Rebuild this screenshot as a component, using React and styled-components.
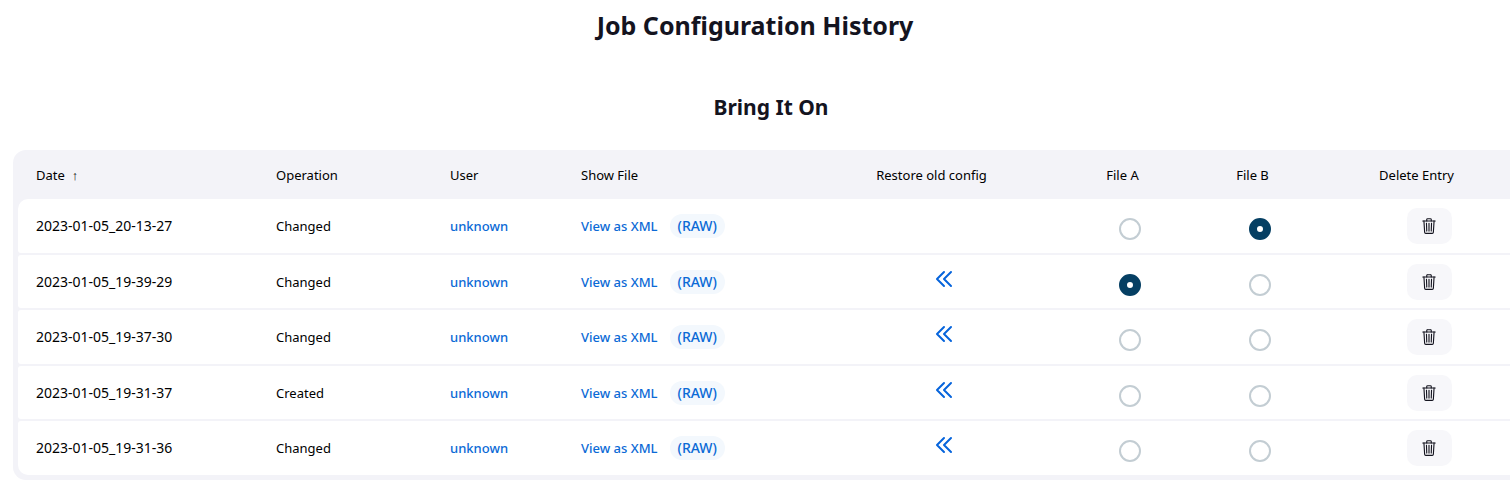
import React, { useState } from "react";
import styled, { createGlobalStyle } from "styled-components";
import { IoTrashOutline } from "react-icons/io5";

const GlobalStyle = createGlobalStyle`
  *, *::before, *::after { box-sizing: border-box; }
  body {
    margin: 0;
    background: #fff;
    color: #14141f;
    font-family: "Noto Sans", "Open Sans", sans-serif;
    font-size: 13px;
    line-height: 20px;
    overflow-x: hidden;
  }
`;

const Page = styled.main`
  overflow: hidden;
  padding: 7px 0 20px;
`;

const Title = styled.h1`
  margin: 0;
  font-size: 25px;
  line-height: 36px;
  font-weight: 700;
  text-align: center;
`;

const Section = styled.section`
  margin: 49px -19px 0 13px;
`;

const JobName = styled.h2`
  margin: 0 0 28px;
  font-size: 21px;
  line-height: 30px;
  font-weight: 700;
  text-align: center;
`;

const Panel = styled.div`
  padding: 0 5px 3px;
  background: #f3f3f8;
  border-radius: 13px;
`;

const Table = styled.table`
  width: 100%;
  table-layout: fixed;
  border-collapse: separate;
  border-spacing: 0 2px;
  color: #000;
`;

const Column = styled.col`
  width: ${(p) => p.$width}px;
`;

const HeadCell = styled.th`
  height: 45px;
  padding: 0 18px;
  font-weight: 400;
  white-space: nowrap;
  text-align: ${(p) => (p.$center ? "center" : "left")};
`;

const SortArrow = styled.span`
  display: inline-block;
  width: 25px;
  padding-left: 7px;
  text-align: left;
`;

const Row = styled.tr`
  height: 54px;
  &:nth-child(even) { height: 53px; }
  &:first-child td:first-child { border-top-left-radius: 10px; }
  &:first-child td:last-child { border-top-right-radius: 10px; }
  &:last-child td:first-child { border-bottom-left-radius: 10px; }
  &:last-child td:last-child { border-bottom-right-radius: 10px; }
`;

const Cell = styled.td`
  padding: 0 18px;
  background: #fff;
  font-weight: 400;
  white-space: nowrap;
  text-align: ${(p) => (p.$center ? "center" : "left")};
  &:first-child { border-radius: 3px 0 0 3px; }
  &:last-child { border-radius: 0 3px 3px 0; }
`;

const DateCell = styled(Cell)`
  font-size: 14px;
`;

const Link = styled.a`
  color: #0b6ad6;
  font-weight: 500;
  text-decoration: none;
`;

const RawLink = styled(Link)`
  display: inline-block;
  margin-left: 12px;
  padding: 2px 8px;
  border-radius: 12px;
  background: #f3f8fd;
  font-size: 14px;
`;

const RestoreLink = styled(Link)`
  display: block;
  height: 22px;
  margin-bottom: 2px;
  color: #0664dc;
`;

const Radio = styled.input`
  appearance: none;
  display: block;
  width: 22px;
  height: 22px;
  margin: 6px auto 0;
  border: 2px solid #c3cdd3;
  border-radius: 50%;
  background: #fff;
  &:checked { border: 8px solid #053f63; }
`;

const RadioSlot = styled.div`
  padding-right: 10px;
`;

const DeleteButton = styled.button`
  display: inline-flex;
  align-items: center;
  justify-content: center;
  width: 45px;
  height: 36px;
  padding: 0;
  border: 0;
  border-radius: 10px;
  background: #f7f7fa;
  color: #14141f;
  vertical-align: middle;
`;

const widths = [240, 174, 131, 251, 260, 122, 138, 190];

const entries = [
  ["2023-01-05_20-13-27", "Changed"],
  ["2023-01-05_19-39-29", "Changed"],
  ["2023-01-05_19-37-30", "Changed"],
  ["2023-01-05_19-31-37", "Created"],
  ["2023-01-05_19-31-36", "Changed"],
];

function DoubleChevron() {
  return (
    <svg width="18" height="18" viewBox="0 0 18 18" fill="none" stroke="currentColor" strokeWidth="2" strokeLinecap="round" strokeLinejoin="round" aria-hidden="true">
      <path d="M9 2 L2 9 L9 16 M16 2 L9 9 L16 16" />
    </svg>
  );
}

function FileChoice({ name, label, checked, onChange }) {
  return (
    <RadioSlot>
      <Radio type="radio" name={name} aria-label={label} checked={checked} onChange={onChange} />
    </RadioSlot>
  );
}

export default function App() {
  const [fileA, setFileA] = useState(1);
  const [fileB, setFileB] = useState(0);

  return (
    <Page>
      <GlobalStyle />
      <Title>Job Configuration History</Title>
      <Section>
        <JobName>Bring It On</JobName>
        <Panel>
          <Table>
            <colgroup>
              {widths.map((w, i) => <Column key={i} $width={w} />)}
            </colgroup>
            <thead>
              <tr>
                <HeadCell>Date<SortArrow>↑</SortArrow></HeadCell>
                <HeadCell>Operation</HeadCell>
                <HeadCell>User</HeadCell>
                <HeadCell>Show File</HeadCell>
                <HeadCell $center>Restore old config<SortArrow /></HeadCell>
                <HeadCell $center>File A<SortArrow /></HeadCell>
                <HeadCell $center>File B<SortArrow /></HeadCell>
                <HeadCell $center>Delete Entry<SortArrow /></HeadCell>
              </tr>
            </thead>
            <tbody>
              {entries.map(([date, operation], i) => (
                <Row key={date}>
                  <DateCell>{date}</DateCell>
                  <Cell>{operation}</Cell>
                  <Cell><Link href="#user">unknown</Link></Cell>
                  <Cell>
                    <Link href="#xml">View as XML</Link>
                    <RawLink href="#raw">(RAW)</RawLink>
                  </Cell>
                  <Cell $center>
                    {i > 0 && (
                      <RestoreLink href="#restore" aria-label={`Restore ${date}`}>
                        <DoubleChevron />
                      </RestoreLink>
                    )}
                  </Cell>
                  <Cell>
                    <FileChoice name="fileA" label={`File A ${date}`} checked={fileA === i} onChange={() => setFileA(i)} />
                  </Cell>
                  <Cell>
                    <FileChoice name="fileB" label={`File B ${date}`} checked={fileB === i} onChange={() => setFileB(i)} />
                  </Cell>
                  <Cell $center>
                    <DeleteButton type="button" aria-label={`Delete ${date}`}>
                      <IoTrashOutline size={18} />
                    </DeleteButton>
                  </Cell>
                </Row>
              ))}
            </tbody>
          </Table>
        </Panel>
      </Section>
    </Page>
  );
}
